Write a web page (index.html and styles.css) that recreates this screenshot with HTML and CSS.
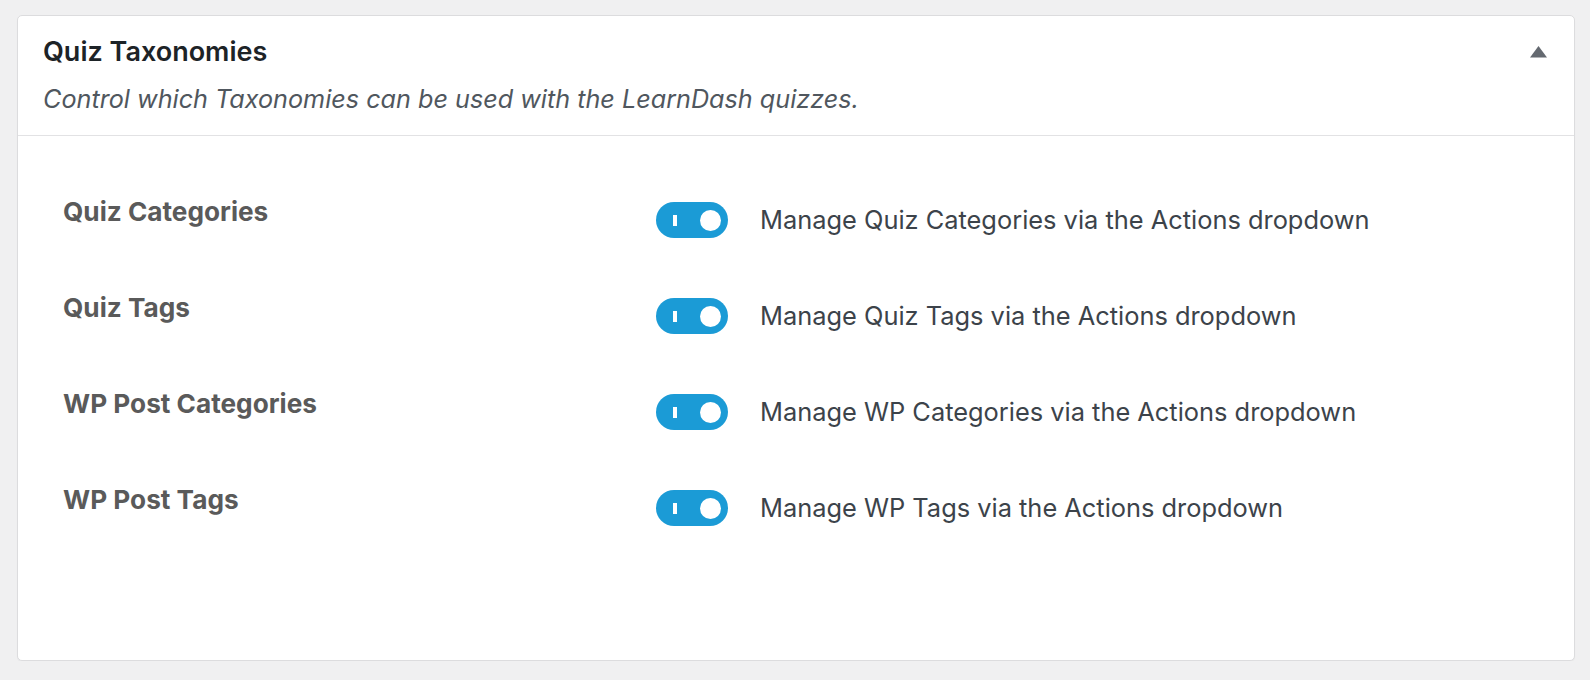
FILE: index.html
```html
<!DOCTYPE html>
<html lang="en">
<head>
<meta charset="utf-8">
<title>Quiz Taxonomies</title>
<link rel="stylesheet" href="styles.css">
</head>
<body>
<div class="card">
  <div class="card-header">
    <div class="header-text">
      <h2 class="title">Quiz Taxonomies</h2>
      <p class="subtitle">Control which Taxonomies can be used with the LearnDash quizzes.</p>
    </div>
    <button class="collapse" aria-label="Collapse">
      <svg width="17" height="12" viewBox="0 0 17 12"><polygon points="8.5,0 17,11.5 0,11.5" fill="#646970"/></svg>
    </button>
  </div>
  <div class="card-body">
    <div class="row">
      <div class="label">Quiz Categories</div>
      <div class="control"><span class="toggle"><span class="bar"></span><span class="knob"></span></span><span class="desc">Manage Quiz Categories via the Actions dropdown</span></div>
    </div>
    <div class="row">
      <div class="label">Quiz Tags</div>
      <div class="control"><span class="toggle"><span class="bar"></span><span class="knob"></span></span><span class="desc">Manage Quiz Tags via the Actions dropdown</span></div>
    </div>
    <div class="row">
      <div class="label">WP Post Categories</div>
      <div class="control"><span class="toggle"><span class="bar"></span><span class="knob"></span></span><span class="desc">Manage WP Categories via the Actions dropdown</span></div>
    </div>
    <div class="row">
      <div class="label">WP Post Tags</div>
      <div class="control"><span class="toggle"><span class="bar"></span><span class="knob"></span></span><span class="desc">Manage WP Tags via the Actions dropdown</span></div>
    </div>
  </div>
</div>
</body>
</html>
```
FILE: styles.css
```css
html, body {
  margin: 0;
  padding: 0;
  background: #f0f0f1;
}
body {
  padding: 15px 15px 0 17px;
  font-family: Inter, "Noto Sans", "Liberation Sans", sans-serif;
}
.card {
  width: 1556px;
  height: 644px;
  background: #fff;
  border: 1px solid #dcdcde;
  border-radius: 5px;
  box-shadow: 0 1px 1px rgba(0,0,0,0.04);
  display: flex;
  flex-direction: column;
}
.card-header {
  display: flex;
  justify-content: space-between;
  align-items: flex-start;
  padding: 20px 27px 21px 25px;
  border-bottom: 1px solid #e2e2e4;
}
.title {
  margin: 0;
  font-size: 27px;
  line-height: 32px;
  font-weight: 600;
  color: #1d2327;
}
.subtitle {
  margin: 16px 0 0;
  font-size: 25.2px;
  line-height: 30px;
  font-style: italic;
  color: #50575e;
}
.collapse {
  border: 0;
  background: none;
  padding: 0;
  margin-top: 10px;
  line-height: 0;
}
.card-body {
  padding: 59px 0 0 45px;
}
.row {
  display: grid;
  grid-template-columns: 593px auto;
  height: 96px;
  align-items: start;
}
.label {
  padding-top: 2px;
  font-size: 26.2px;
  line-height: 30px;
  font-weight: 700;
  color: #5a5a5a;
}
.control {
  display: flex;
  align-items: center;
  gap: 32px;
  padding-top: 7px;
}
.toggle {
  width: 72px;
  height: 36px;
  border-radius: 18px;
  background: #1b9bd6;
  display: flex;
  align-items: center;
  justify-content: space-between;
  padding: 0 7px 0 17px;
  box-sizing: border-box;
}
.bar {
  width: 3.5px;
  height: 11px;
  background: #fff;
}
.knob {
  width: 21px;
  height: 21px;
  border-radius: 50%;
  background: #fff;
}
.desc {
  font-size: 25.4px;
  line-height: 30px;
  color: #3c434a;
}
```
